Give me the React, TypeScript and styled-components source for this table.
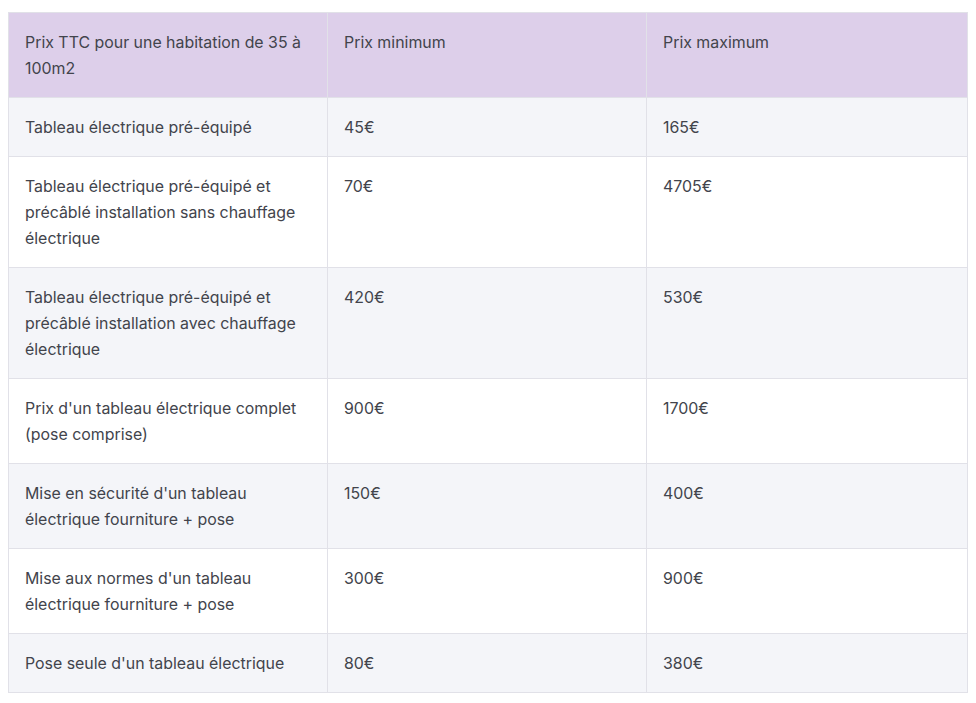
import React from 'react';
import styled, { createGlobalStyle } from 'styled-components';

const GlobalStyle = createGlobalStyle`
  html, body {
    margin: 0;
    padding: 0;
    background: #ffffff;
  }
  body {
    font-family: Inter, "Noto Sans", "Liberation Sans", sans-serif;
  }
`;

const Page = styled.div`
  padding: 12px 8px;
`;

const Table = styled.table`
  width: 960px;
  border-collapse: collapse;
  table-layout: fixed;
  border: 1px solid #e1e1e8;
  font-size: 15.9px;
  line-height: 26px;
  color: #42444c;
`;

const HeadCell = styled.th`
  background: #ddcfea;
  font-weight: 400;
  text-align: left;
  vertical-align: top;
  padding: 17px 16px 15px;
  border: 1px solid #e1e1e8;
  border-top: none;
  border-bottom: none;
`;

const Row = styled.tr<{ $striped: boolean }>`
  background: ${p => (p.$striped ? '#f4f5f9' : '#ffffff')};
`;

const Cell = styled.td`
  text-align: left;
  vertical-align: top;
  padding: 17px 16px 15px;
  border: 1px solid #e1e1e8;
`;

const rows = [
  ['Tableau électrique pré-équipé', '45€', '165€'],
  ['Tableau électrique pré-équipé et précâblé installation sans chauffage électrique', '70€', '4705€'],
  ['Tableau électrique pré-équipé et précâblé installation avec chauffage électrique', '420€', '530€'],
  ["Prix d'un tableau électrique complet (pose comprise)", '900€', '1700€'],
  ["Mise en sécurité d'un tableau électrique fourniture + pose", '150€', '400€'],
  ["Mise aux normes d'un tableau électrique fourniture + pose", '300€', '900€'],
  ["Pose seule d'un tableau électrique", '80€', '380€'],
];

const App: React.FC = () => {
  return (
    <Page>
      <GlobalStyle />
      <Table>
        <colgroup>
          <col style={{ width: 319 }} />
          <col style={{ width: 319 }} />
          <col />
        </colgroup>
        <thead>
          <tr>
            <HeadCell>Prix TTC pour une habitation de 35 à 100m2</HeadCell>
            <HeadCell>Prix minimum</HeadCell>
            <HeadCell>Prix maximum</HeadCell>
          </tr>
        </thead>
        <tbody>
          {rows.map((r, i) => (
            <Row key={i} $striped={i % 2 === 0}>
              <Cell>{r[0]}</Cell>
              <Cell>{r[1]}</Cell>
              <Cell>{r[2]}</Cell>
            </Row>
          ))}
        </tbody>
      </Table>
    </Page>
  );
};

export default App;
